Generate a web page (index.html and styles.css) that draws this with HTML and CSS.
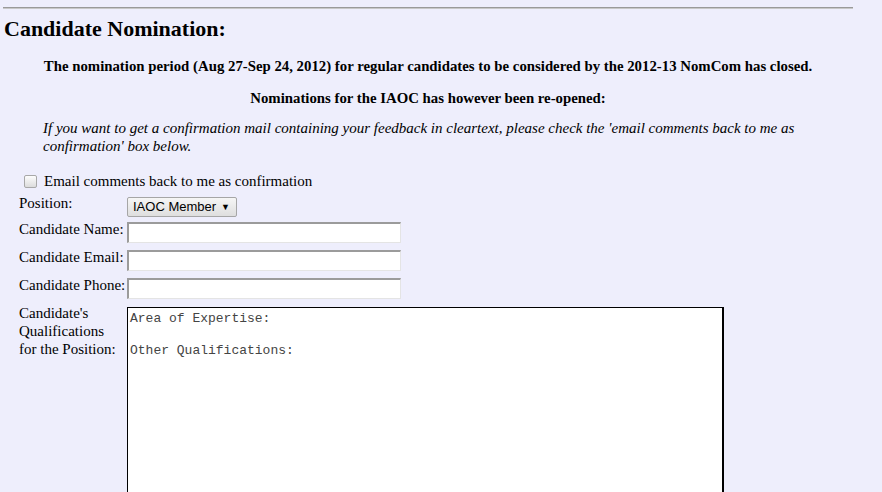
FILE: index.html
```html
<!DOCTYPE html>
<html>
<head>
<meta charset="utf-8">
<link rel="stylesheet" href="styles.css">
</head>
<body>
<div class="page">
  <hr class="rule">
  <h2 class="title">Candidate Nomination:</h2>
  <div class="notice">
    <p class="bold first">The nomination period (Aug 27-Sep 24, 2012) for regular candidates to be considered by the 2012-13 NomCom has closed.</p>
    <p class="bold second">Nominations for the IAOC has however been re-opened:</p>
    <p class="ital">If you want to get a confirmation mail containing your feedback in cleartext, please check the 'email comments back to me as confirmation' box below.</p>
  </div>
  <form class="form">
    <label class="check"><span class="box"></span>Email comments back to me as confirmation</label>
    <div class="grid">
      <div class="lbl">Position:</div>
      <div class="cell-select"><span class="select">IAOC Member <span class="arrow">&#9660;</span></span></div>
      <div class="lbl">Candidate Name:</div>
      <div class="cell-input"><span class="input"></span></div>
      <div class="lbl">Candidate Email:</div>
      <div class="cell-input"><span class="input"></span></div>
      <div class="lbl">Candidate Phone:</div>
      <div class="cell-input"><span class="input"></span></div>
      <div class="lbl">Candidate's<br>Qualifications<br>for the Position:</div>
      <div class="cell-area"><div class="textarea">Area of Expertise:

Other Qualifications:</div></div>
    </div>
  </form>
</div>
</body>
</html>
```

FILE: styles.css
```css
html, body {
  margin: 0;
  padding: 0;
  background: #eeeefc;
  overflow: hidden;
}
body {
  font-family: "Liberation Serif", "Times New Roman", serif;
  color: #000;
}
.page {
  width: 850px;
  padding: 0 3px;
}
.rule {
  margin: 7px 0 0 0;
  height: 0;
  border: 0;
  border-top: 1px solid #9a9a9a;
  border-bottom: 1px solid #c8c8c8;
}
.title {
  font-size: 22px;
  font-weight: bold;
  margin: 7px 0 0 1px;
  line-height: 26px;
}
.notice {
  padding: 0 40px 0 40px;
  margin-top: 15px;
}
.notice p {
  margin: 0;
}
.bold {
  font-weight: bold;
  font-size: 14.8px;
  text-align: center;
  line-height: 18px;
}
.second {
  margin-top: 14px !important;
}
.ital {
  font-style: italic;
  font-size: 15px;
  line-height: 18px;
  margin-top: 12px !important;
}
.form {
  margin-top: 17px;
  padding-left: 16px;
}
.check {
  display: flex;
  align-items: center;
  font-size: 15px;
  line-height: 18px;
  padding-left: 5px;
}
.box {
  width: 11px;
  height: 11px;
  border: 1px solid #a8a8a8;
  border-radius: 2px;
  background: linear-gradient(#fdfdfd, #dcdcdc);
  margin-right: 7px;
}
.grid {
  display: grid;
  grid-template-columns: 108px 1fr;
  grid-template-rows: 26px 28px 28px 28px auto;
  align-items: start;
  font-size: 15px;
  line-height: 18px;
  margin-top: 4px;
}
.cell-select { padding-top: 3px; }
.cell-input { padding-top: 2px; }
.cell-area { padding-top: 3px; }
.select {
  display: inline-flex;
  align-items: center;
  height: 20px;
  box-sizing: border-box;
  width: 110px;
  padding: 0 6px 0 5px;
  border: 1px solid #a6a6a6;
  border-radius: 2px;
  background: linear-gradient(#f6f6f6, #dedede);
  font-family: "Liberation Sans", Arial, sans-serif;
  font-size: 13px;
  justify-content: space-between;
}
.arrow { font-size: 9px; }
.input {
  display: block;
  width: 274px;
  height: 21px;
  box-sizing: border-box;
  background: #fff;
  border-top: 2px solid #9b9b9b;
  border-left: 2px solid #9b9b9b;
  border-right: 1px solid #e4e4e4;
  border-bottom: 1px solid #e4e4e4;
}
.textarea {
  width: 597px;
  height: 200px;
  box-sizing: border-box;
  background: #fff;
  border: 2px solid #000;
  border-left-width: 1px;
  border-top-width: 1px;
  white-space: pre;
  font-family: "Liberation Mono", "Courier New", monospace;
  font-size: 13px;
  line-height: 16px;
  color: #444;
  padding: 3px 2px;
}
```
